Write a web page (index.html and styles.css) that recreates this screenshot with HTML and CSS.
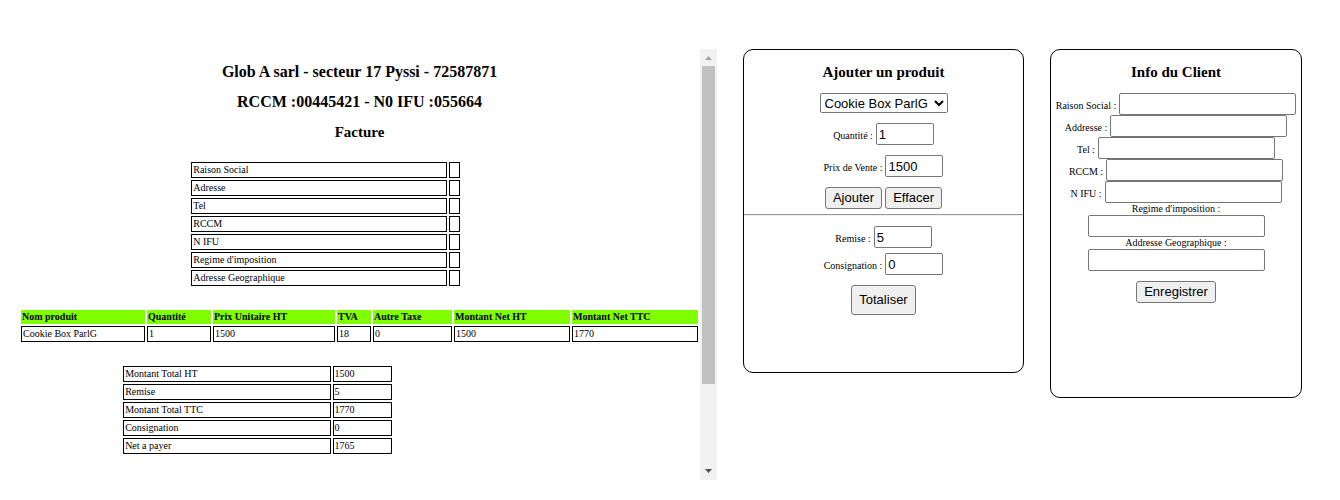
FILE: index.html
```html
<!DOCTYPE html>
<html lang="fr">
<head>
<meta charset="utf-8">
<title>Facture</title>
<link rel="stylesheet" href="styles.css">
</head>
<body>
<main class="page">
  <section class="invoice">
    <div class="invoice-body">
      <h1 class="title company">Glob A sarl - secteur 17 Pyssi - 72587871</h1>
      <h2 class="title company">RCCM :00445421 - N0 IFU :055664</h2>
      <h2 class="title">Facture</h2>
      <table class="grid client-table">
        <tr><td>Raison Social</td><td class="value"></td></tr>
        <tr><td>Adresse</td><td class="value"></td></tr>
        <tr><td>Tel</td><td class="value"></td></tr>
        <tr><td>RCCM</td><td class="value"></td></tr>
        <tr><td>N IFU</td><td class="value"></td></tr>
        <tr><td>Regime d'imposition</td><td class="value"></td></tr>
        <tr><td>Adresse Geographique</td><td class="value"></td></tr>
      </table>
      <table class="grid product-table">
        <thead>
          <tr>
            <th class="c-name">Nom produit</th>
            <th class="c-qty">Quantité</th>
            <th class="c-price">Prix Unitaire HT</th>
            <th class="c-vat">TVA</th>
            <th class="c-tax">Autre Taxe</th>
            <th class="c-net">Montant Net HT</th>
            <th class="c-ttc">Montant Net TTC</th>
          </tr>
        </thead>
        <tbody>
          <tr><td>Cookie Box ParlG</td><td>1</td><td>1500</td><td>18</td><td>0</td><td>1500</td><td>1770</td></tr>
        </tbody>
      </table>
      <table class="grid totals-table">
        <tr><td>Montant Total HT</td><td class="value">1500</td></tr>
        <tr><td>Remise</td><td class="value">5</td></tr>
        <tr><td>Montant Total TTC</td><td class="value">1770</td></tr>
        <tr><td>Consignation</td><td class="value">0</td></tr>
        <tr><td>Net a payer</td><td class="value">1765</td></tr>
      </table>
    </div>
    <div class="scrollbar" aria-hidden="true">
      <svg class="arrow arrow-up" viewBox="0 0 17 17"><path d="M5 11L8.500 7L12 11Z"/></svg>
      <div class="track"><div class="thumb"></div></div>
      <svg class="arrow arrow-down" viewBox="0 0 17 17"><path d="M5 6L12 6L8.500 10Z"/></svg>
    </div>
  </section>

  <form class="card product-card">
    <h2 class="title">Ajouter un produit</h2>
    <div class="group">
      <select class="picker" aria-label="Produit"><option>Cookie Box ParlG</option></select>
      <div class="row"><label for="qty">Quantité :</label><input class="short" id="qty" type="text" value="1"></div>
      <div class="row"><label for="price">Prix de Vente :</label><input class="short" id="price" type="text" value="1500"></div>
      <div class="row"><button type="button">Ajouter</button><button type="button">Effacer</button></div>
    </div>
    <hr class="rule">
    <div class="group totals">
      <div class="row"><label for="discount">Remise :</label><input class="short" id="discount" type="text" value="5"></div>
      <div class="row"><label for="deposit">Consignation :</label><input class="short" id="deposit" type="text" value="0"></div>
      <button class="tall" type="button">Totaliser</button>
    </div>
  </form>

  <form class="card client-card">
    <h2 class="title">Info du Client</h2>
    <div class="fields">
      <div class="row"><label for="name">Raison Social :</label><input class="long" id="name" type="text"></div>
      <div class="row"><label for="address">Addresse :</label><input class="long" id="address" type="text"></div>
      <div class="row"><label for="tel">Tel :</label><input class="long" id="tel" type="text"></div>
      <div class="row"><label for="rccm">RCCM :</label><input class="long" id="rccm" type="text"></div>
      <div class="row"><label for="ifu">N IFU :</label><input class="long" id="ifu" type="text"></div>
      <label for="regime">Regime d'imposition :</label><input class="long" id="regime" type="text">
      <label for="geo">Addresse Geographique :</label><input class="long" id="geo" type="text">
    </div>
    <button type="button">Enregistrer</button>
  </form>
</main>
</body>
</html>
```

FILE: styles.css
```css
* { box-sizing: border-box; }

body {
  margin: 0;
  background: #fff;
  color: #000;
  font: 10px/12px "Liberation Serif", serif;
}

.page {
  display: grid;
  grid-template-columns: 698fr 281fr 252fr;
  gap: 26px;
  align-items: start;
  padding: 49px 38px 20px 19px;
}

.title {
  margin: 14px 0;
  font-size: 15px;
  line-height: 16px;
  text-align: center;
}

.company { font-size: 16px; }

/* Invoice preview */
.invoice {
  display: flex;
  min-height: 431px;
}

.invoice-body {
  flex: 1;
  padding-top: 1px;
}

.grid {
  border-collapse: separate;
  border-spacing: 2px;
  table-layout: fixed;
  margin-top: 20px;
}

.grid td, .grid th {
  height: 16px;
  padding: 1px;
  text-align: left;
}

.grid td { border: 1px solid #000; }

.grid th {
  height: 14px;
  background: #80ff00;
}

.client-table { width: 40%; margin-left: 25%; }
.client-table .value { width: 11px; }
.product-table { width: 100%; }
.totals-table { width: 40%; margin-left: 15%; }
.totals-table .value { width: 59px; }

/* Shares of the table width */
.c-name { width: 124px; }
.c-qty { width: 64px; }
.c-price { width: 122px; }
.c-vat { width: 34px; }
.c-tax { width: 79px; }
.c-net { width: 116px; }
.c-ttc { width: 126px; }

.scrollbar {
  display: flex;
  flex-direction: column;
  width: 17px;
  background: #f1f1f1;
}

.arrow { width: 17px; height: 17px; }
.arrow-up { fill: #a3a3a3; }
.arrow-down { fill: #505050; }
.track { flex: 1; padding: 0 2px; }
.thumb { height: 80%; background: #c1c1c1; }

/* Forms */
.card {
  display: flex;
  flex-direction: column;
  align-items: center;
  border: 1px solid #000;
  border-radius: 10px;
}

.card .title { margin-bottom: 13px; }
.product-card { min-height: 324px; }
.client-card { min-height: 349px; }

.group, .fields {
  display: flex;
  flex-direction: column;
  align-items: center;
  gap: 10px;
}

.fields { gap: 0; margin-bottom: 10px; }

.row {
  display: flex;
  align-items: baseline;
  gap: 3px;
}

.totals .row + .row { margin-top: -5px; }

input, select, button {
  height: 22px;
  margin: 0;
  border: 1px solid #767676;
  border-radius: 2px;
  background: #fff;
  color: #000;
  font: 13px/16px "Liberation Sans", sans-serif;
}

input { padding: 1px 2px; }
.short { width: 58px; }
.long { width: 177px; }

.picker {
  width: 128px;
  height: 20px;
}

button {
  padding: 1px 7px;
  border-radius: 3px;
  background: #efefef;
}

.tall { height: 30px; }

.rule {
  width: 100%;
  margin: 5px 0 10px;
  border: 0;
  border-top: 1px solid #9a9a9a;
  border-bottom: 1px solid #eee;
}
```
